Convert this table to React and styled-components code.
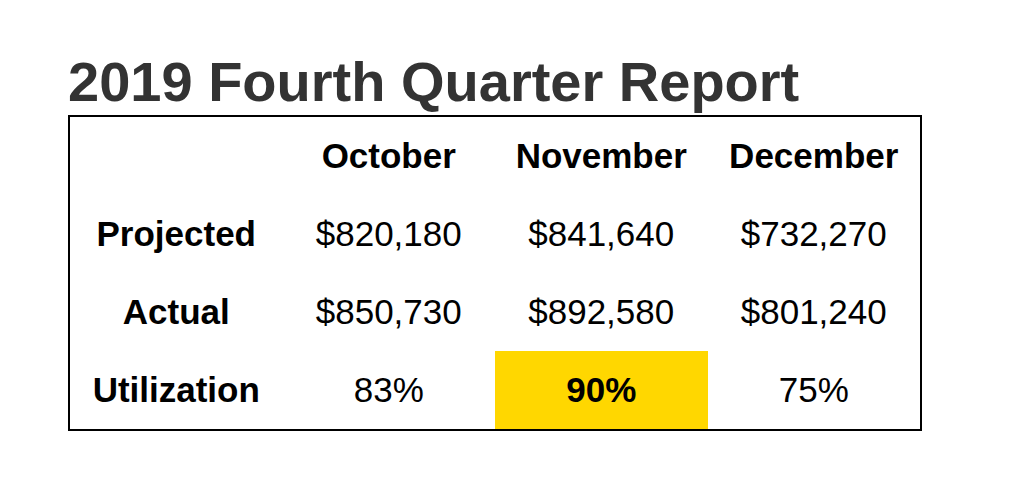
import React from 'react';
import styled, { createGlobalStyle } from 'styled-components';

const GlobalStyle = createGlobalStyle`
    body {
        margin: 0;
        background: #fff;
        font-family: "Liberation Sans", Arial, sans-serif;
    }
`

const Page = styled.div`
    padding: 50px 0 0 68px;
`

const Title = styled.h1`
    margin: 0 0 2px 0;
    font-size: 56px;
    line-height: 63px;
    font-weight: bold;
    color: #333;
`

const Table = styled.table`
    width: 854px;
    table-layout: fixed;
    border: 2px solid #000;
    border-spacing: 0;
    color: #000;
`

const Cell = styled.td`
    height: 78px;
    padding: 0;
    text-align: center;
    vertical-align: middle;
    font-size: 35px;
    font-weight: ${props => (props.$bold ? 'bold' : 'normal')};
    background: ${props => (props.$highlight ? '#ffd700' : 'transparent')};
`

const months = ['October', 'November', 'December'];

const rows = [
    { label: 'Projected', values: ['$820,180', '$841,640', '$732,270'] },
    { label: 'Actual', values: ['$850,730', '$892,580', '$801,240'] },
    { label: 'Utilization', values: ['83%', '90%', '75%'], highlight: 1 },
];

function App() {
    return (
        <Page>
            <GlobalStyle />
            <Title>2019 Fourth Quarter Report</Title>
            <Table>
                <tbody>
                    <tr>
                        <Cell />
                        {months.map(m => (
                            <Cell key={m} $bold>{m}</Cell>
                        ))}
                    </tr>
                    {rows.map(row => (
                        <tr key={row.label}>
                            <Cell $bold>{row.label}</Cell>
                            {row.values.map((v, i) => (
                                <Cell key={v} $bold={row.highlight === i} $highlight={row.highlight === i}>
                                    {v}
                                </Cell>
                            ))}
                        </tr>
                    ))}
                </tbody>
            </Table>
        </Page>
    )
}

export default App;
